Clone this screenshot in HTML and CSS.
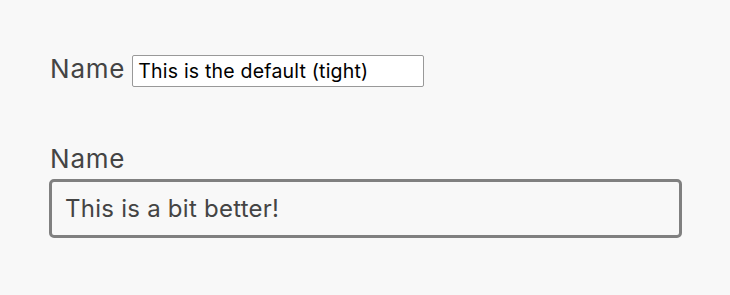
FILE: index.html
```html
<!DOCTYPE html>
<html lang="en">
<head>
  <meta charset="UTF-8">
  <title>Inputs</title>
  <link rel="stylesheet" href="styles.css">
</head>
<body>
  <div class="page">
    <div class="field inline">
      <label class="label" for="n1">Name</label>
      <input class="tight" id="n1" type="text" value="This is the default (tight)">
    </div>
    <div class="field stacked">
      <label class="label" for="n2">Name</label>
      <input class="better" id="n2" type="text" value="This is a bit better!">
    </div>
  </div>
</body>
</html>
```
FILE: styles.css
```css
body {
  margin: 0;
  background: #f8f8f8;
  font-family: Inter, "Liberation Sans", sans-serif;
  color: #444;
}
.page {
  padding: 53px 48px 0 49px;
}
.field {
  display: flex;
}
.inline {
  align-items: baseline;
  gap: 7px;
}
.stacked {
  flex-direction: column;
  align-items: flex-start;
  margin-top: 56px;
  gap: 4px;
}
.label {
  font-size: 26px;
  line-height: 32px;
  letter-spacing: 0.8px;
  padding-left: 1px;
}
.tight {
  width: 292px;
  height: 32px;
  box-sizing: border-box;
  border: 1px solid #999;
  border-radius: 2px;
  padding: 0 5px;
  font: 19.5px Inter, "Liberation Sans", sans-serif;
  letter-spacing: 0.2px;
  color: #000;
  background: #fff;
}
.better {
  width: 633px;
  height: 59px;
  box-sizing: border-box;
  border: 3px solid #808080;
  border-radius: 5px;
  padding: 0 13px;
  font: 24px Inter, "Liberation Sans", sans-serif;
  letter-spacing: 0.25px;
  color: #444;
  background: #f8f8f8;
}
```
